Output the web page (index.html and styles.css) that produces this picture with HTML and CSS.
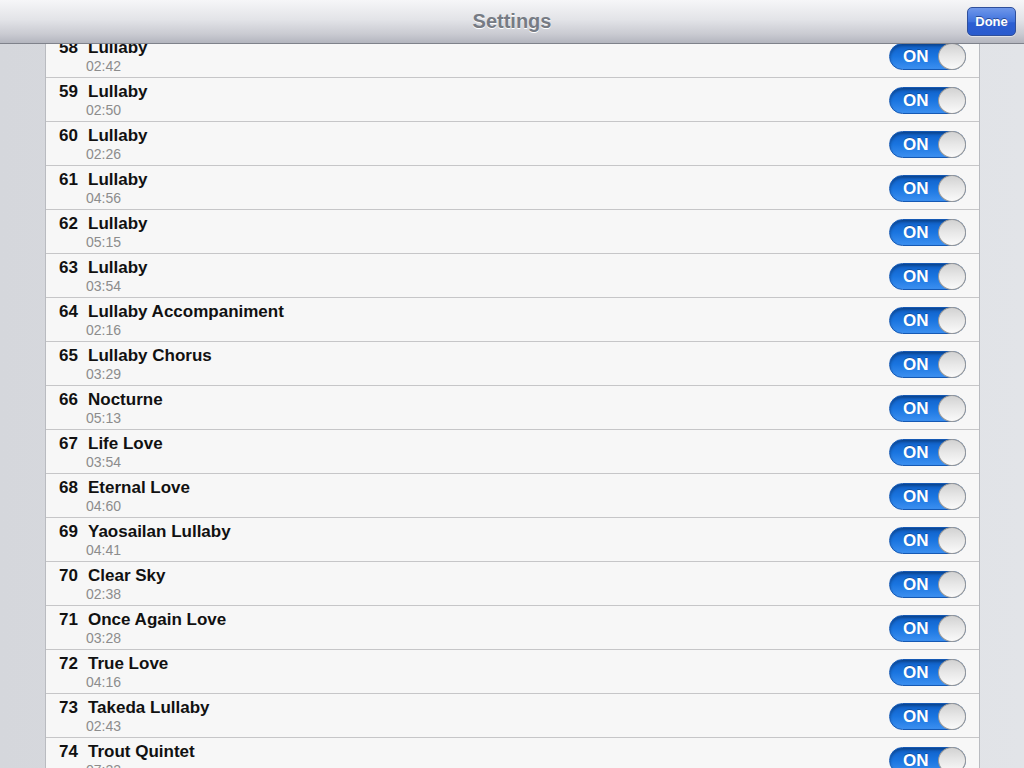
FILE: index.html
```html
<!DOCTYPE html>
<html lang="en">
<head>
    <meta charset="UTF-8">
    <meta name="viewport" content="width=device-width, initial-scale=1.0">
    <title>Settings</title>
    <link rel="stylesheet" href="styles.css">
</head>
<body>
<div class="navbar">
    <h1>Settings</h1>
    <button class="done-button">Done</button>
</div>

<div class="track-list">
    <div class="track"><div class="track-info"><div class="track-title"><span class="num">58</span>Lullaby</div><div class="track-time">02:42</div></div><div class="switch"><span>ON</span><i></i></div></div>
    <div class="track"><div class="track-info"><div class="track-title"><span class="num">59</span>Lullaby</div><div class="track-time">02:50</div></div><div class="switch"><span>ON</span><i></i></div></div>
    <div class="track"><div class="track-info"><div class="track-title"><span class="num">60</span>Lullaby</div><div class="track-time">02:26</div></div><div class="switch"><span>ON</span><i></i></div></div>
    <div class="track"><div class="track-info"><div class="track-title"><span class="num">61</span>Lullaby</div><div class="track-time">04:56</div></div><div class="switch"><span>ON</span><i></i></div></div>
    <div class="track"><div class="track-info"><div class="track-title"><span class="num">62</span>Lullaby</div><div class="track-time">05:15</div></div><div class="switch"><span>ON</span><i></i></div></div>
    <div class="track"><div class="track-info"><div class="track-title"><span class="num">63</span>Lullaby</div><div class="track-time">03:54</div></div><div class="switch"><span>ON</span><i></i></div></div>
    <div class="track"><div class="track-info"><div class="track-title"><span class="num">64</span>Lullaby Accompaniment</div><div class="track-time">02:16</div></div><div class="switch"><span>ON</span><i></i></div></div>
    <div class="track"><div class="track-info"><div class="track-title"><span class="num">65</span>Lullaby Chorus</div><div class="track-time">03:29</div></div><div class="switch"><span>ON</span><i></i></div></div>
    <div class="track"><div class="track-info"><div class="track-title"><span class="num">66</span>Nocturne</div><div class="track-time">05:13</div></div><div class="switch"><span>ON</span><i></i></div></div>
    <div class="track"><div class="track-info"><div class="track-title"><span class="num">67</span>Life Love</div><div class="track-time">03:54</div></div><div class="switch"><span>ON</span><i></i></div></div>
    <div class="track"><div class="track-info"><div class="track-title"><span class="num">68</span>Eternal Love</div><div class="track-time">04:60</div></div><div class="switch"><span>ON</span><i></i></div></div>
    <div class="track"><div class="track-info"><div class="track-title"><span class="num">69</span>Yaosailan Lullaby</div><div class="track-time">04:41</div></div><div class="switch"><span>ON</span><i></i></div></div>
    <div class="track"><div class="track-info"><div class="track-title"><span class="num">70</span>Clear Sky</div><div class="track-time">02:38</div></div><div class="switch"><span>ON</span><i></i></div></div>
    <div class="track"><div class="track-info"><div class="track-title"><span class="num">71</span>Once Again Love</div><div class="track-time">03:28</div></div><div class="switch"><span>ON</span><i></i></div></div>
    <div class="track"><div class="track-info"><div class="track-title"><span class="num">72</span>True Love</div><div class="track-time">04:16</div></div><div class="switch"><span>ON</span><i></i></div></div>
    <div class="track"><div class="track-info"><div class="track-title"><span class="num">73</span>Takeda Lullaby</div><div class="track-time">02:43</div></div><div class="switch"><span>ON</span><i></i></div></div>
    <div class="track"><div class="track-info"><div class="track-title"><span class="num">74</span>Trout Quintet</div><div class="track-time">07:22</div></div><div class="switch"><span>ON</span><i></i></div></div>
</div>
</body>
</html>
```

FILE: styles.css
```css
html, body {
    height: 100%;
    overflow: hidden;
}

body {
    margin: 0;
    font-family: "Liberation Sans", Arial, sans-serif;
    background: linear-gradient(to right, #d5d7dc, #e2e4e8);
}

.navbar {
    position: absolute;
    top: 0;
    left: 0;
    right: 0;
    height: 43px;
    border-bottom: 1px solid #7f828b;
    background: linear-gradient(to bottom, #f6f6f8 0%, #e3e4e8 45%, #c9cad1 80%, #b3b5be 100%);
    display: flex;
    justify-content: center;
    align-items: center;
    z-index: 2;
}

.navbar h1 {
    margin: 0 0 1px 0;
    font-size: 20px;
    font-weight: bold;
    color: #767b84;
    text-shadow: 0 1px 0 #fff;
}

.done-button {
    position: absolute;
    right: 8px;
    top: 7px;
    width: 49px;
    height: 29px;
    padding: 0;
    border: 1px solid #2f4f9b;
    border-radius: 5px;
    background: linear-gradient(to bottom, #6f97ea 0%, #3f72dd 50%, #2c5fd3 55%, #2b5bcd 100%);
    color: #fff;
    font-family: "Liberation Sans", Arial, sans-serif;
    font-size: 13px;
    font-weight: bold;
    text-shadow: 0 -1px 0 #2a4a94;
    box-shadow: 0 1px 0 rgba(255, 255, 255, 0.5);
}

.track-list {
    margin: 34px 45px 0 45px;
    width: 933px;
    border-left: 1px solid #b9bbc0;
    border-right: 1px solid #b9bbc0;
    background-color: #f7f7f7;
}

.track {
    height: 43px;
    border-bottom: 1px solid #c6c6c8;
    display: flex;
    align-items: center;
    justify-content: space-between;
    padding-right: 13px;
}

.track-info {
    align-self: flex-start;
    padding-top: 4px;
    padding-left: 13px;
}

.track-title {
    font-size: 17px;
    line-height: 20px;
    font-weight: bold;
    color: #111;
}

.track-title .num {
    display: inline-block;
    width: 29px;
}

.track-time {
    font-size: 14px;
    line-height: 16px;
    color: #8c8c8c;
    padding-left: 27px;
}

.switch {
    position: relative;
    width: 77px;
    height: 27px;
    margin-top: 1px;
    border-radius: 14px;
    border: 1px solid #1559b4;
    box-sizing: border-box;
    background: linear-gradient(to bottom, #0f5fc7 0%, #1a75e0 50%, #3b8ff0 100%);
    box-shadow: inset 0 2px 3px rgba(0, 0, 0, 0.3);
}

.switch span {
    position: absolute;
    left: 13px;
    top: 4px;
    font-size: 17px;
    line-height: 18px;
    font-weight: bold;
    color: #fff;
    text-shadow: 0 -1px 0 rgba(0, 0, 0, 0.25);
}

.switch i {
    position: absolute;
    right: -1px;
    top: -1px;
    width: 28px;
    height: 27px;
    box-sizing: border-box;
    border-radius: 50%;
    border: 1px solid #9a9a9a;
    background: linear-gradient(to bottom, #d2d2d2 0%, #e8e8e8 50%, #fafafa 100%);
}
```
